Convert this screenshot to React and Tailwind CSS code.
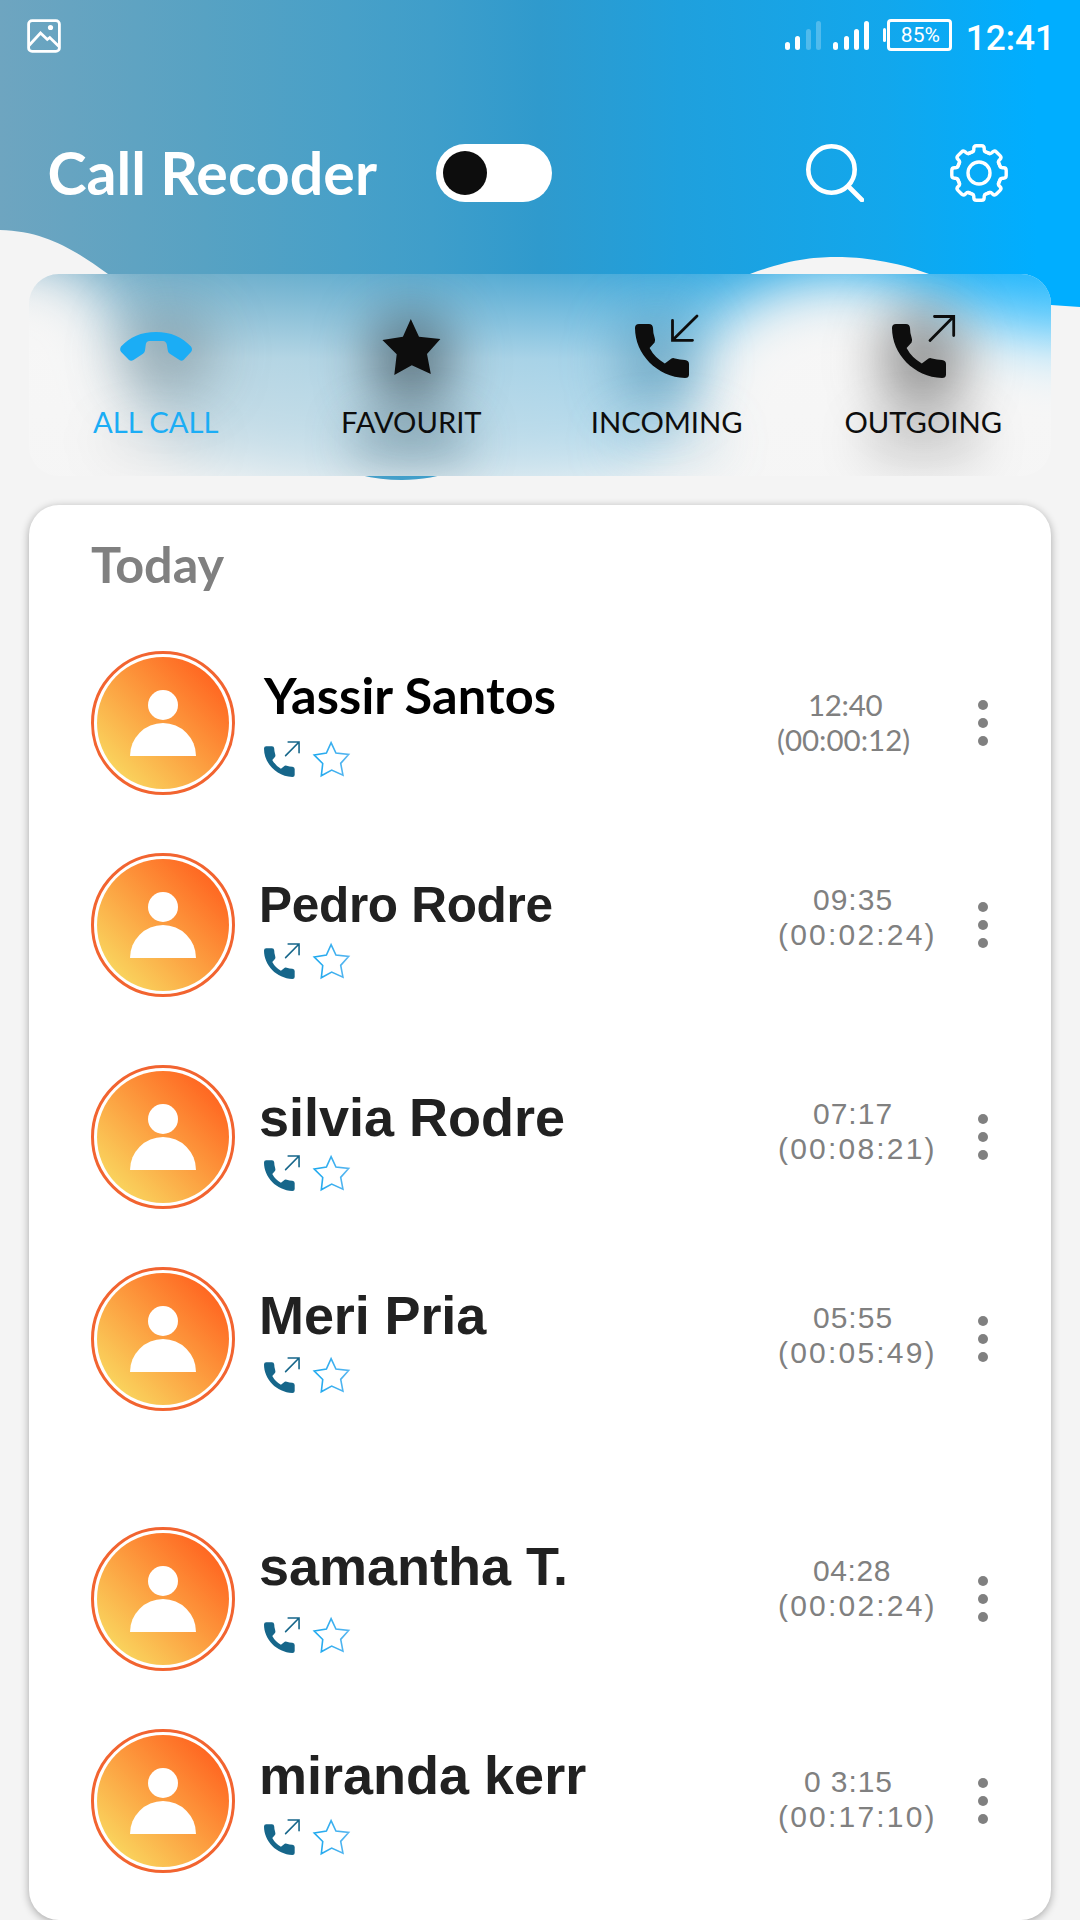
const LATO = "font-[Lato,sans-serif]";
const ARIAL = "font-['Liberation_Sans',sans-serif]";

const STAR =
  "M28.8 1 L37 18.7 L58.4 21 L45 36 L48.8 56 L29.8 47.3 L12.3 57 L14.7 36.3 L0.4 22 L20.9 18.7 Z";
const HANDSET =
  "M4 0 H14 Q17.6 0 18 4 Q18 9 19.6 13.5 Q20.6 16 19.6 18.5 L14.6 24 Q19.5 33.5 29.8 39.4 L36.5 34.4 Q38 33.6 40 34.4 Q45 35.8 50 36 Q54 36.4 54 40 V50.5 Q54 54 50 54 C22 53 0 30 0 4 Q0 0 4 0 Z";
const WAVE =
  "M-100 -100 H1180 V307 H1080 L1051 305 C1010 303 965 288 929 274 C895 261 860 257 838 257 C815 257 790 259 750 274 C620 325 532 480 402 480 C270 480 190 333 108 274 C75 250 45 231 0 230 H-100 Z";
const SOFT_WAVE =
  "M-100 -100 H1180 V352 H1051 C1010 348 965 325 929 305 C895 288 870 282 838 282 C790 284 755 298 725 330 C690 375 700 460 590 484 C480 498 330 498 220 470 C115 440 130 350 98 295 C75 272 45 262 0 262 H-100 Z";

const calls = [
  { name: "Yassir Santos", time: "12:40", length: "(00:00:12)", row: "", nameCls: "font-[Lato,sans-serif] text-[50.5px] text-black pt-[14px] pl-[5px] tracking-[0.1px]", timeCol: "font-[Lato,sans-serif] text-[29.5px] pt-[36px]", first: "pl-[31px] tracking-[-0.3px]", second: "" },
  { name: "Pedro Rodre", time: "09:35", length: "(00:02:24)", row: "mt-[58px]", nameCls: "text-[49.5px] text-[#212121] pt-[22px] tracking-[-0.3px]", timeCol: "text-[30px] pt-[29px]", first: "pl-[36px] tracking-[1px]", second: "pl-[1px] tracking-[2.2px]" },
  { name: "silvia Rodre", time: "07:17", length: "(00:08:21)", row: "mt-[68px]", nameCls: "text-[54px] text-[#212121] pt-[22px]", timeCol: "text-[30px] pt-[31px]", first: "pl-[36px] tracking-[1px]", second: "pl-[1px] tracking-[2.2px]" },
  { name: "Meri Pria", time: "05:55", length: "(00:05:49)", row: "mt-[58px]", nameCls: "text-[54px] text-[#212121] pt-[18px] tracking-[-0.1px]", timeCol: "text-[30px] pt-[33px]", first: "pl-[36px] tracking-[1px]", second: "pl-[1px] tracking-[2.2px]" },
  { name: "samantha T.", time: "04:28", length: "(00:02:24)", row: "mt-[116px]", nameCls: "text-[54px] text-[#212121] pt-[9px]", timeCol: "text-[30px] pt-[26px]", first: "pl-[36px] tracking-[0.6px]", second: "pl-[1px] tracking-[2.2px]" },
  { name: "miranda kerr", time: "0 3:15", length: "(00:17:10)", row: "mt-[58px]", nameCls: "text-[54px] text-[#212121] pt-[16px]", timeCol: "text-[30px] pt-[35px]", first: "pl-[27px] tracking-[0.9px]", second: "pl-[1px] tracking-[2.2px]" },
];

function Signal({ weak }) {
  const dim = weak ? "bg-white/25" : "bg-white";
  return (
    <div className="flex h-[29px] items-end gap-[5.4px]">
      <div className="h-[8px] w-[5px] rounded-sm bg-white" />
      <div className="h-[14px] w-[5px] rounded-sm bg-white" />
      <div className={`h-[21px] w-[5px] rounded-sm ${dim}`} />
      <div className={`h-[29px] w-[5px] rounded-sm ${dim}`} />
    </div>
  );
}

function Wave({ id, d, className }) {
  return (
    <svg className={className} viewBox="0 0 1080 500" overflow="visible">
      <defs>
        <linearGradient id={id} gradientUnits="userSpaceOnUse" x1="0" x2="1080" y1="0" y2="0">
          <stop offset="0" stopColor="#6ea5c0" />
          <stop offset="0.19" stopColor="#57a2c3" />
          <stop offset="0.32" stopColor="#48a0c8" />
          <stop offset="0.4" stopColor="#3f9eca" />
          <stop offset="0.5" stopColor="#2f9acd" />
          <stop offset="0.63" stopColor="#1fa0dd" />
          <stop offset="0.82" stopColor="#12a7ec" />
          <stop offset="0.96" stopColor="#00aeff" />
        </linearGradient>
      </defs>
      <path fill={`url(#${id})`} d={d} />
    </svg>
  );
}

function Gear() {
  return (
    <svg className="h-[58px] w-[58px]" viewBox="-29 -29 58 58" fill="none" stroke="white" strokeWidth="3.4" strokeLinecap="round" strokeLinejoin="round">
      {[0, 45, 90, 135, 180, 225, 270, 315].map((a) => (
        <path key={a} transform={`rotate(${a})`} d="M-10.7 -19.4 L-7 -21 Q-5.2 -21.6 -5.2 -23.6 V-24.4 Q-5.2 -27.2 -2.6 -27.2 H2.6 Q5.2 -27.2 5.2 -24.4 V-23.6 Q5.2 -21.6 7 -21 L10.7 -19.4" />
      ))}
      <circle r="11" />
    </svg>
  );
}

function PhoneArrow({ incoming, className, arrowWidth }) {
  return (
    <svg className={className} viewBox="0 0 66 66" overflow="visible">
      <path transform="translate(0 11)" fill="currentColor" d={HANDSET} />
      <g fill="none" stroke="currentColor" strokeWidth={arrowWidth} strokeLinecap="round" strokeLinejoin="miter">
        {incoming ? <path d="M37.5 7.5 V27.3 H57.5 M37.5 27.3 L62 3" /> : <path d="M42.5 3.5 H61.7 V22.5 M61.7 3.5 L38 27.5" />}
      </g>
    </svg>
  );
}

function Tab({ label, children, color, glow, labelGlow, className }) {
  return (
    <div className={`relative flex w-[255.5px] flex-col items-center ${color} ${className}`}>
      <div className={`absolute rounded-full blur-[27px] ${glow}`} />
      <div className={`absolute top-[140px] h-[44px] w-[120px] rounded-full blur-[24px] ${labelGlow}`} />
      <div className="relative flex h-[125px] w-full items-start justify-center">{children}</div>
      <div className="relative text-[29.2px] leading-[36px] whitespace-nowrap">{label}</div>
    </div>
  );
}

function Avatar() {
  return (
    <div className="h-[144px] w-[144px] shrink-0 rounded-full border-[3px] border-[#f26430] p-[3px]">
      <div className="flex h-full w-full justify-center rounded-full bg-[linear-gradient(to_top_right,#f9dc62_8%,#ff6420_88%)]">
        <svg className="mt-[33px] h-[66px] w-[66px]" viewBox="0 0 66 66" fill="white">
          <circle cx="33" cy="15" r="15" />
          <path d="M0 66 A33 33 0 0 1 66 66 Z" />
        </svg>
      </div>
    </div>
  );
}

function CallRow({ call }) {
  return (
    <div className={`flex h-[144px] text-[#808080] ${ARIAL} ${call.row}`}>
      <Avatar />
      <div className="ml-[24px] w-[518px]">
        <div className={`h-[89px] font-bold leading-[60px] whitespace-nowrap ${call.nameCls}`}>{call.name}</div>
        <div className="flex items-start pl-[5px]">
          <PhoneArrow className="h-[37.5px] w-[37.5px] text-[#16668a]" arrowWidth="2.8" />
          <svg className="mt-[1.5px] ml-[12.5px] h-[35px] w-[35px]" viewBox="0 0 59 59" overflow="visible">
            <defs>
              <linearGradient id="favStroke" x1="0" x2="1" y1="0" y2="0">
                <stop offset="0" stopColor="#1ba8ee" />
                <stop offset="1" stopColor="#58b6f0" />
              </linearGradient>
            </defs>
            <path d={STAR} fill="none" stroke="url(#favStroke)" strokeWidth="2.7" />
          </svg>
        </div>
      </div>
      <div className={`w-[200.6px] leading-[35px] whitespace-nowrap ${call.timeCol}`}>
        <div className={call.first}>{call.time}</div>
        <div className={call.second}>{call.length}</div>
      </div>
      <div className="flex flex-col justify-center gap-[7.4px]">
        <div className="h-[10.6px] w-[10.6px] rounded-full bg-[#808080]" />
        <div className="h-[10.6px] w-[10.6px] rounded-full bg-[#808080]" />
        <div className="h-[10.6px] w-[10.6px] rounded-full bg-[#808080]" />
      </div>
    </div>
  );
}

export default function App() {
  return (
    <div className={`relative flex h-[1920px] w-[1080px] flex-col overflow-hidden bg-[#f4f4f4] ${LATO}`}>
      <Wave id="sky" d={WAVE} className="absolute top-0 left-0 h-[500px] w-[1080px]" />

      <header className="relative flex h-[274px] flex-col text-white">
        <div className="flex h-[72px] items-center pr-[25px] pl-[27px] font-[Roboto,sans-serif]">
          <svg className="h-[34px] w-[34px]" viewBox="0 0 34 34" fill="none" stroke="white" strokeWidth="2.8">
            <rect x="1.6" y="1.6" width="30.8" height="30.8" rx="3.5" />
            <path d="M2 26.5 L13.5 14 L20.3 20.5 L22.8 18.5 L32 27.5" />
            <circle cx="23.5" cy="8.5" r="2.6" fill="white" stroke="none" />
          </svg>
          <div className="mt-[-2px] ml-[724px]"><Signal weak /></div>
          <div className="mt-[-2px] ml-[12px]"><Signal /></div>
          <div className="mt-[-2px] ml-[14px] h-[14px] w-[3px] shrink-0 rounded-sm bg-white" />
          <div className="mt-[-2px] ml-[1px] flex h-[32px] w-[65px] shrink-0 items-center justify-center rounded-[4px] border-[3px] border-white pl-[1px] text-[21px] leading-none">85%</div>
          <div className="mt-[5px] ml-auto text-[35.2px] leading-none font-medium">12:41</div>
        </div>
        <div className="flex h-[202px] items-start pt-[72px] pl-[47.5px]">
          <h1 className="mt-[-6px] w-[388.5px] text-[59.1px] leading-[70px] font-bold whitespace-nowrap">Call Recoder</h1>
          <div className="h-[58px] w-[116px] rounded-full bg-white p-[7px]">
            <div className="h-[44px] w-[44px] rounded-full bg-[#0d0d0d]" />
          </div>
          <svg className="mr-[86px] ml-[254px] h-[58px] w-[58px]" viewBox="0 0 58 58" fill="none" stroke="white" strokeWidth="4.6" strokeLinecap="round">
            <circle cx="25.5" cy="25.5" r="23.2" />
            <path d="M43 43 L56 56" />
          </svg>
          <Gear />
        </div>
      </header>

      {/* Frosted tab panel: a blurred wave under a white veil */}
      <nav className="relative mx-[29px] h-[202px] overflow-hidden rounded-[30px] bg-[#f4f4f4]">
        <Wave id="skyBlur" d={SOFT_WAVE} className="absolute -top-[274px] -left-[29px] h-[500px] w-[1080px] max-w-none blur-[28px]" />
        <div className="absolute inset-0 bg-[linear-gradient(to_bottom,rgba(246,246,246,0.18),rgba(248,248,248,0.6)_42%,rgba(246,246,246,0.76))]" />
        <div className="relative flex h-full pt-[5px]">
          <Tab label="ALL CALL" color="text-[#1badf5]" className="-ml-px" glow="top-[30px] left-[92px] h-[88px] w-[96px] bg-[#5a6065]/35" labelGlow="bg-black/5">
            <svg className="mt-[53px] h-[29px] w-[72px]" viewBox="0 0 72 29" fill="currentColor">
              <path d="M36 0 C51 0 62 5 71 14.5 Q73 17.5 71 20 L63.5 28 Q61.5 29.6 59.5 28 L49.5 21.5 Q48 20.5 47.8 18.5 L46.8 12.5 Q46 9.3 43 9.1 H29.5 Q26.3 9.3 25.8 12.5 L25 18.5 Q24.8 20.5 23 21.8 L13.5 28 Q11 29.6 9 28 L1.2 20 Q-0.8 17.5 1 14.5 C10 5 21 0 36 0 Z" />
            </svg>
          </Tab>
          <Tab label="FAVOURIT" color="text-[#0d0d0d]" glow="top-[32px] h-[98px] w-[82px] bg-[#2c3a42]/60" labelGlow="bg-[#1f4a5e]/35">
            <svg className="mt-[39px] h-[59px] w-[59px]" viewBox="0 0 59 59" fill="currentColor"><path d={STAR} /></svg>
          </Tab>
          <Tab label="INCOMING" color="text-[#0d0d0d]" glow="top-[36px] left-[80px] h-[94px] w-[76px] bg-[#3f7f9f]/50" labelGlow="bg-[#4a93b3]/15">
            <PhoneArrow incoming className="mt-[34px] ml-[3px] h-[66px] w-[66px]" arrowWidth="2.8" />
          </Tab>
          <Tab label="OUTGOING" color="text-[#0d0d0d]" className="ml-px" glow="top-[30px] h-[102px] w-[82px] bg-[#303030]/50" labelGlow="bg-black/15">
            <PhoneArrow className="mt-[34px] ml-[3px] h-[66px] w-[66px]" arrowWidth="2.8" />
          </Tab>
        </div>
      </nav>

      <main className="relative mx-[29px] mt-[29px] h-[1415px] rounded-[30px] bg-white pl-[62px] shadow-[0_2px_8px_rgba(0,0,0,0.32)]">
        <h2 className="h-[146px] pt-[29px] text-[50.4px] leading-[60px] font-bold text-[#808080]">Today</h2>
        {calls.map((c) => (
          <CallRow key={c.name} call={c} />
        ))}
      </main>
    </div>
  );
}
